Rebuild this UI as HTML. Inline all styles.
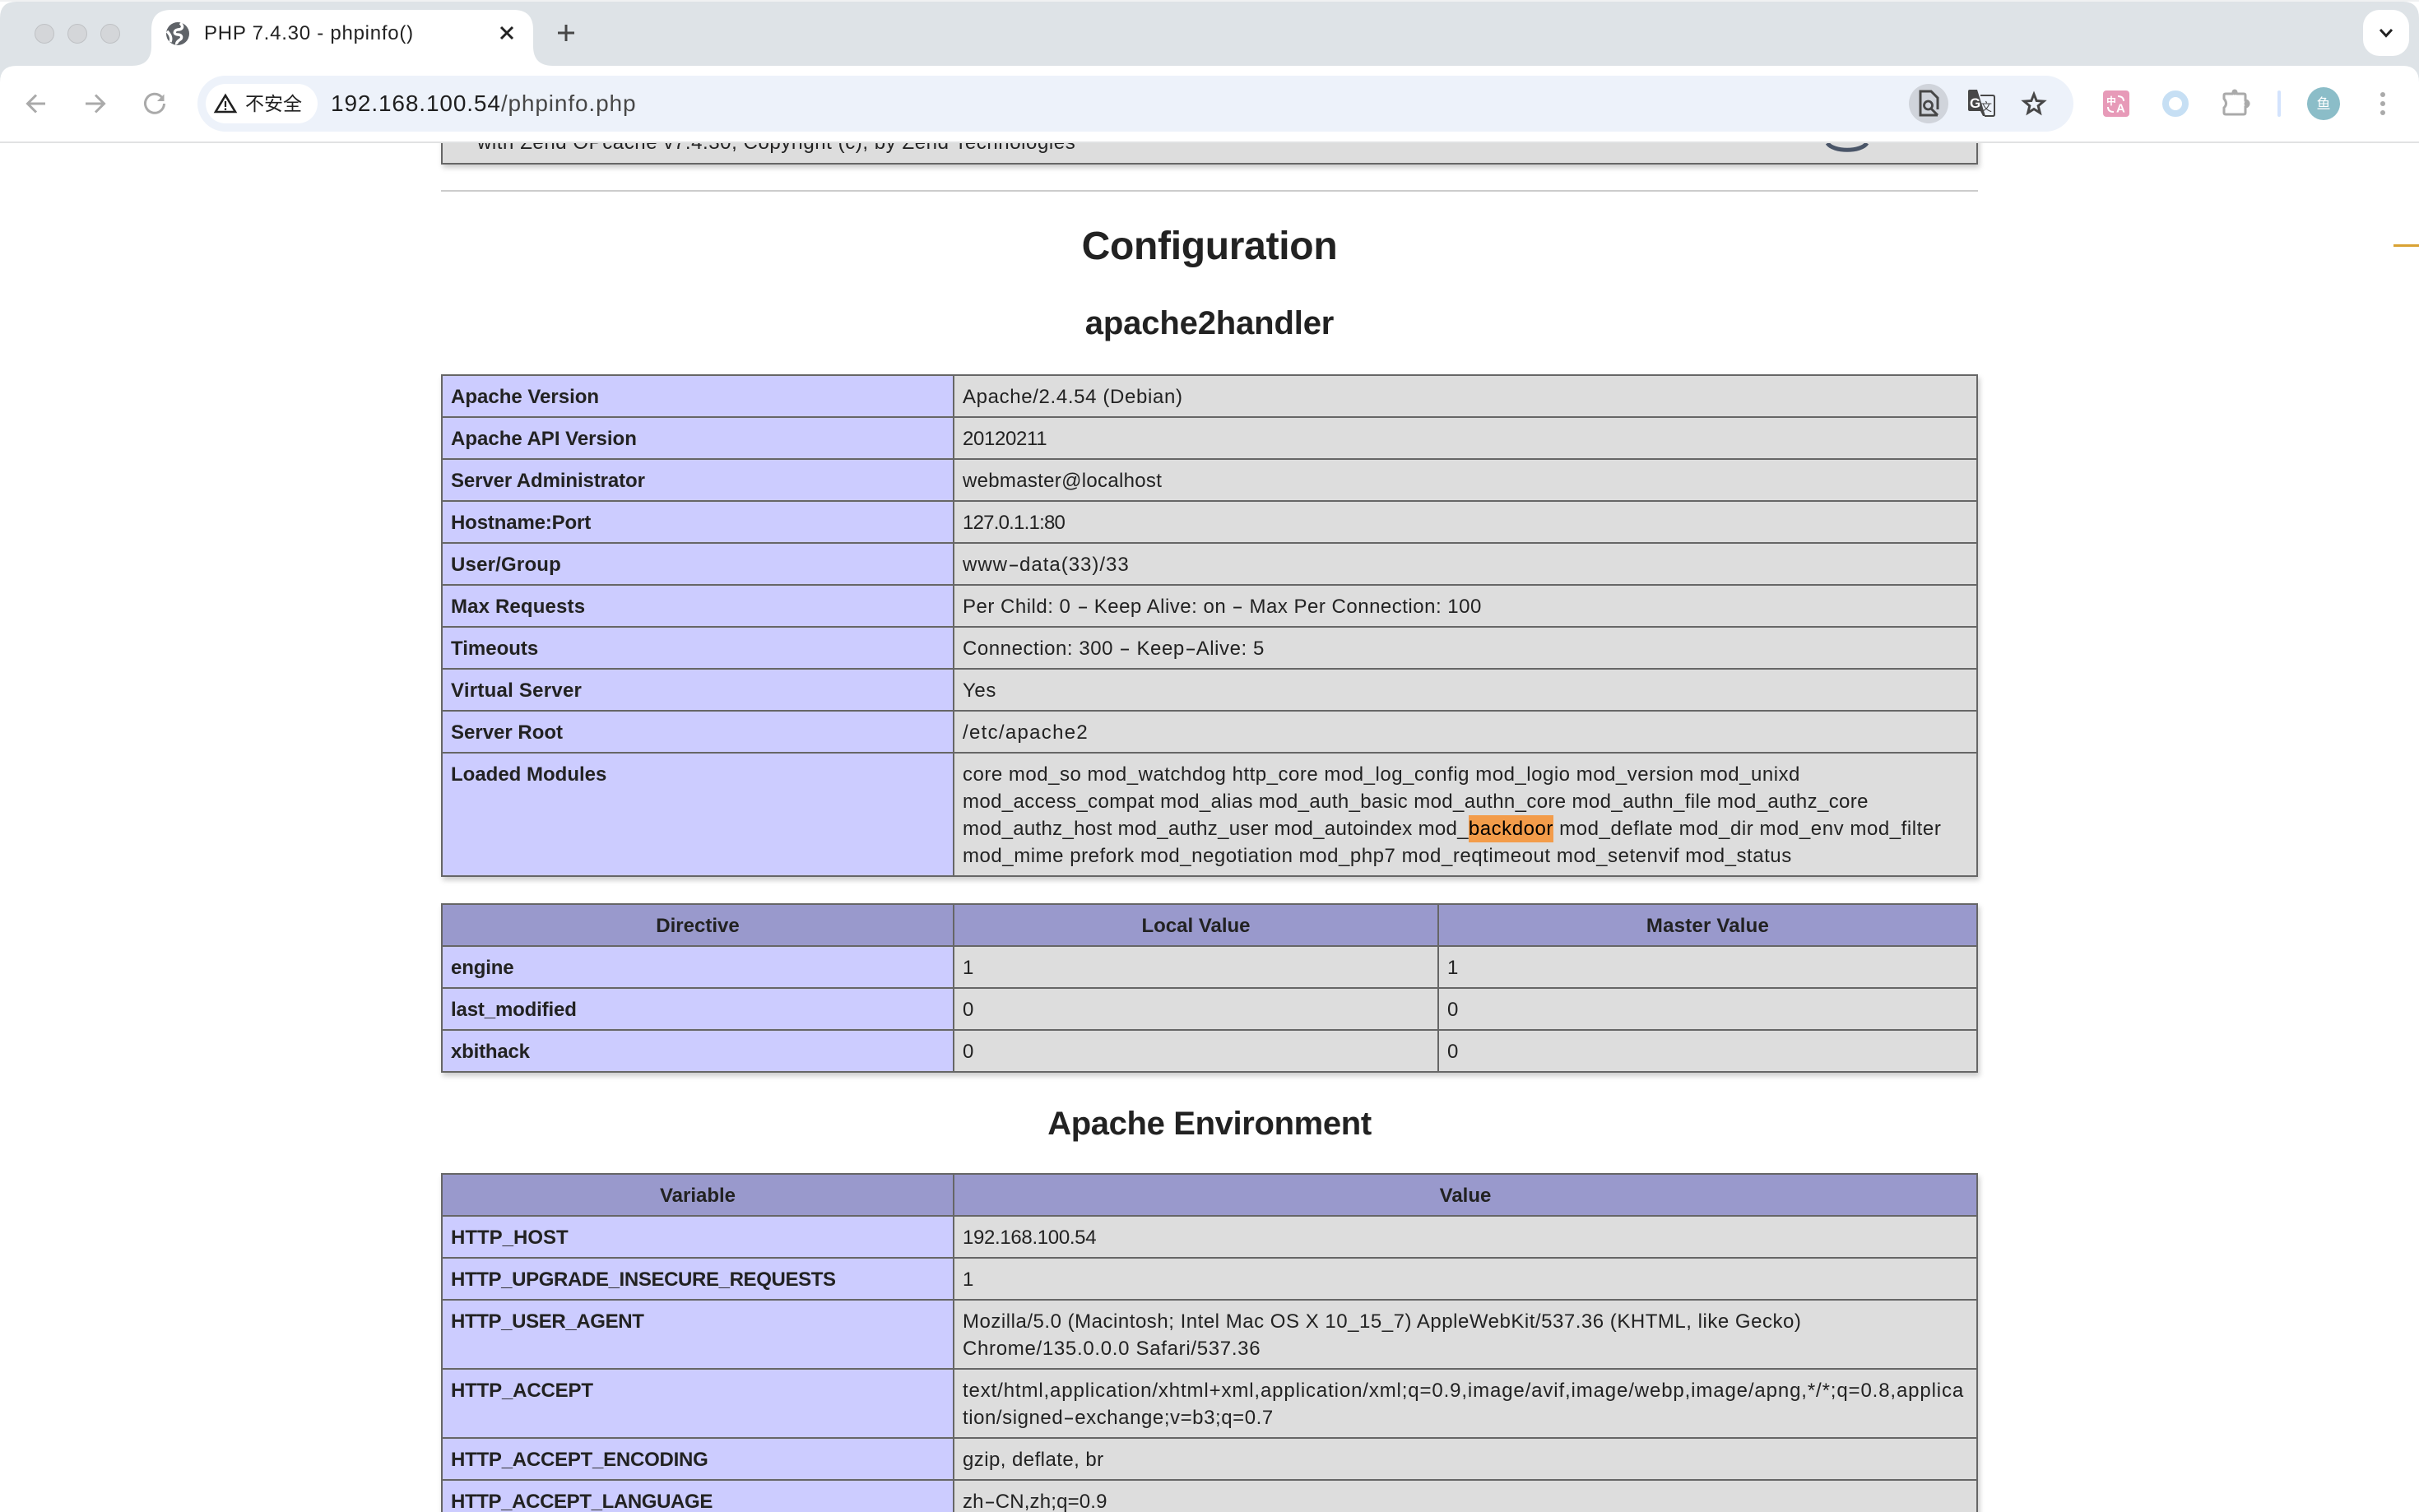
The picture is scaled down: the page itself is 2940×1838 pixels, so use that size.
<!DOCTYPE html>
<html lang="zh-CN">
<head>
<meta charset="utf-8">
<title>PHP 7.4.30 - phpinfo()</title>
<style>
html,body{margin:0;padding:0;width:2940px;height:1838px;overflow:hidden;background:#fff}
body{position:relative;font-family:"Liberation Sans","Noto Sans CJK SC",sans-serif;color:#222}
.abs{position:absolute;white-space:nowrap}
table{position:absolute;left:536px;width:1868px;border-collapse:collapse;table-layout:fixed;font-size:24px;line-height:33px;box-shadow:2px 4px 6px #ccc;color:#222}
td,th{border:2px solid #666;padding:9px 10px 7px;vertical-align:top;white-space:nowrap;overflow:visible;text-align:left}
td.e{background:#ccf;font-weight:bold}
td.v{background:#ddd}
tr.h th{background:#99c;font-weight:bold;text-align:center}
mark{display:inline-block;height:33px;line-height:33px;background:#f39c4a;color:#000}
i{display:inline-block;font-style:normal;width:14px;text-align:center;transform:scaleX(1.7);letter-spacing:0}
h2{position:absolute;left:536px;width:1868px;margin:0;text-align:center;font-weight:bold;color:#222}
#chrome{position:absolute;left:0;top:0;width:2940px;height:174px;overflow:hidden}
</style>
</head>
<body>

<div class="abs" style="left:536px;top:90px;width:1864px;height:106px;background:#ddd;border:2px solid #666;box-shadow:2px 4px 6px #ccc"></div>
<div class="abs" style="left:580px;top:157px;font-size:24px;line-height:33px;letter-spacing:.57px;color:#222">with Zend OPcache v7.4.30, Copyright (c), by Zend Technologies</div>
<svg class="abs" style="left:2200px;top:150px" width="90" height="40" viewBox="0 0 90 40"><path d="M21 24 C28 35 62 35 69 24" fill="none" stroke="#4a5568" stroke-width="5"/></svg>

<div class="abs" style="left:536px;top:231px;width:1868px;height:2px;background:#ccc"></div>

<h2 style="top:270px;font-size:48px;line-height:60px;letter-spacing:-.3px">Configuration</h2>
<h2 style="top:368px;font-size:40px;line-height:50px;letter-spacing:-.15px">apache2handler</h2>

<table style="top:455px">
<colgroup><col style="width:622px"><col></colgroup>
<tr><td class="e">Apache Version</td><td class="v" style="letter-spacing:.64px">Apache/2.4.54 (Debian)</td></tr>
<tr><td class="e">Apache API Version</td><td class="v" style="letter-spacing:-.35px">20120211</td></tr>
<tr><td class="e" style="letter-spacing:-.1px">Server Administrator</td><td class="v" style="letter-spacing:.3px">webmaster@localhost</td></tr>
<tr><td class="e" style="letter-spacing:-.15px">Hostname:Port</td><td class="v" style="letter-spacing:-.78px">127.0.1.1:80</td></tr>
<tr><td class="e" style="letter-spacing:.2px">User/Group</td><td class="v" style="letter-spacing:1px">www<i>-</i>data(33)/33</td></tr>
<tr><td class="e" style="letter-spacing:.15px">Max Requests</td><td class="v" style="letter-spacing:.5px">Per Child: 0 <i>-</i> Keep Alive: on <i>-</i> Max Per Connection: 100</td></tr>
<tr><td class="e">Timeouts</td><td class="v" style="letter-spacing:.55px">Connection: 300 <i>-</i> Keep<i>-</i>Alive: 5</td></tr>
<tr><td class="e" style="letter-spacing:.25px">Virtual Server</td><td class="v" style="letter-spacing:.6px">Yes</td></tr>
<tr><td class="e">Server Root</td><td class="v" style="letter-spacing:1.3px">/etc/apache2</td></tr>
<tr><td class="e">Loaded Modules</td><td class="v"><span style="letter-spacing:.51px">core mod_so mod_watchdog http_core mod_log_config mod_logio mod_version mod_unixd</span><br><span style="letter-spacing:.37px">mod_access_compat mod_alias mod_auth_basic mod_authn_core mod_authn_file mod_authz_core</span><br><span style="letter-spacing:.3px">mod_authz_host mod_authz_user mod_autoindex mod_</span><mark style="letter-spacing:.55px">backdoor</mark><span style="letter-spacing:.56px"> mod_deflate mod_dir mod_env mod_filter</span><br><span style="letter-spacing:.54px">mod_mime prefork mod_negotiation mod_php7 mod_reqtimeout mod_setenvif mod_status</span></td></tr>
</table>

<table style="top:1098px">
<colgroup><col style="width:622px"><col style="width:589px"><col></colgroup>
<tr class="h"><th>Directive</th><th>Local Value</th><th style="letter-spacing:.2px">Master Value</th></tr>
<tr><td class="e" style="letter-spacing:-.15px">engine</td><td class="v">1</td><td class="v">1</td></tr>
<tr><td class="e" style="letter-spacing:-.15px">last_modified</td><td class="v">0</td><td class="v">0</td></tr>
<tr><td class="e" style="letter-spacing:-.2px">xbithack</td><td class="v">0</td><td class="v">0</td></tr>
</table>

<h2 style="top:1341px;font-size:40px;line-height:50px;letter-spacing:-.36px">Apache Environment</h2>

<table style="top:1426px">
<colgroup><col style="width:622px"><col></colgroup>
<tr class="h"><th>Variable</th><th>Value</th></tr>
<tr><td class="e">HTTP_HOST</td><td class="v" style="letter-spacing:-.33px">192.168.100.54</td></tr>
<tr><td class="e" style="letter-spacing:-.37px">HTTP_UPGRADE_INSECURE_REQUESTS</td><td class="v">1</td></tr>
<tr><td class="e" style="letter-spacing:-.37px">HTTP_USER_AGENT</td><td class="v"><span style="letter-spacing:.52px">Mozilla/5.0 (Macintosh; Intel Mac OS X 10_15_7) AppleWebKit/537.36 (KHTML, like Gecko)</span><br><span style="letter-spacing:.69px">Chrome/135.0.0.0 Safari/537.36</span></td></tr>
<tr><td class="e" style="letter-spacing:-.17px">HTTP_ACCEPT</td><td class="v"><span style="letter-spacing:.87px">text/html,application/xhtml+xml,application/xml;q=0.9,image/avif,image/webp,image/apng,*/*;q=0.8,applica</span><br><span style="letter-spacing:.56px">tion/signed<i>-</i>exchange;v=b3;q=0.7</span></td></tr>
<tr><td class="e" style="letter-spacing:-.24px">HTTP_ACCEPT_ENCODING</td><td class="v" style="letter-spacing:.44px">gzip, deflate, br</td></tr>
<tr><td class="e" style="letter-spacing:-.37px">HTTP_ACCEPT_LANGUAGE</td><td class="v" style="letter-spacing:.17px">zh<i>-</i>CN,zh;q=0.9</td></tr>
</table>

<div class="abs" style="left:2909px;top:297px;width:31px;height:3px;background:#d9a233"></div>

<div id="chrome">
<svg class="abs" style="left:0;top:0" width="2940" height="174" viewBox="0 0 2940 174">
  <!-- window frame -->
  <rect width="2940" height="174" fill="#fff"/>
  <path d="M0 174V22Q0 2 20 2H2920Q2940 2 2940 22V174Z" fill="#dee3e7"/>
  <path d="M0 0H2940V2H0Z" fill="#f0f1f2"/>
  <!-- toolbar -->
  <path d="M0 174V100Q0 80 20 80H2920Q2940 80 2940 100V174Z" fill="#fff"/>
  <rect y="172" width="2940" height="2" fill="#e1e2e3"/>
  <!-- tab -->
  <path d="M160 80Q184 80 184 56V36Q184 12 208 12H624Q648 12 648 36V56Q648 80 672 80Z" fill="#fff"/>
  <!-- traffic lights -->
  <g fill="#d4d6d9" stroke="#bfc1c4" stroke-width="1"><circle cx="54" cy="41" r="11.5"/><circle cx="94" cy="41" r="11.5"/><circle cx="134" cy="41" r="11.5"/></g>
  <!-- globe -->
  <circle cx="216" cy="41" r="14" fill="#5f6368"/>
  <path d="M219 28C224 33 221 36 216 36C211 37 211 42 216 42C221 42 222 46 219 48C216 50 214 52 215 54M203 38C207 42 209 46 207 51" fill="none" stroke="#fff" stroke-width="3.4"/>
  <!-- close + plus -->
  <path d="M609 33L623 47M623 33L609 47" stroke="#222" stroke-width="3" fill="none"/>
  <path d="M688 30V50M678 40H698" stroke="#474747" stroke-width="3" fill="none"/>
  <!-- nav -->
  <path d="M55 126H34M44 115.500L33.500 126L44 136.500" fill="none" stroke="#aaa" stroke-width="3"/>
  <path d="M104 126H126M116 115.500L126.500 126L116 136.500" fill="none" stroke="#aaa" stroke-width="3"/>
  <path d="M196.500 118A11.500 11.500 0 1 0 199.500 126" fill="none" stroke="#aaa" stroke-width="3"/>
  <path d="M199.500 114.500V123H191Z" fill="#aaa"/>
  <!-- address bar -->
  <rect x="240" y="92" width="2280" height="68" rx="34" fill="#edf2fa"/>
  <rect x="250" y="102" width="136" height="48" rx="24" fill="#fff"/>
  <path d="M274 116L286 136H262Z" fill="none" stroke="#1f1f1f" stroke-width="2.600" stroke-linejoin="miter"/>
  <path d="M274 123V130M274 131.500V134" stroke="#1f1f1f" stroke-width="2.200" fill="none"/>
  <!-- page-info circle + doc -->
  <circle cx="2344" cy="126" r="24" fill="#d0d4db"/>
  <path d="M2355 140H2334V111H2347L2355 119V133" fill="none" stroke="#474747" stroke-width="3"/>
  <circle cx="2343.500" cy="128" r="5" fill="none" stroke="#474747" stroke-width="2.800"/>
  <path d="M2347 132L2355 140" stroke="#474747" stroke-width="3"/>
  <!-- translate -->
  <path d="M2394 109H2403L2413 141H2410L2407 135H2394Q2392 135 2392 133V111Q2392 109 2394 109Z" fill="#474747"/>
  <path d="M2407 116H2422Q2424 116 2424 118V139Q2424 141 2422 141H2412" fill="none" stroke="#474747" stroke-width="2"/>
  <text x="2394" y="131" font-family="Liberation Sans,sans-serif" font-size="17" font-weight="bold" fill="#fff">G</text>
  <text x="2407" y="135" font-family="Noto Sans CJK SC,sans-serif" font-size="14" fill="#474747">文</text>
  <!-- star -->
  <path d="M2472 114.500L2475.200 122.500L2483.900 123.100L2477.200 128.700L2479.300 137.100L2472 132.500L2464.700 137.100L2466.800 128.700L2460.100 123.100L2468.800 122.500Z" fill="none" stroke="#474747" stroke-width="3"/>
  <!-- pink ext -->
  <rect x="2556" y="110" width="32" height="32" rx="4" fill="#e79ab8"/>
  <text x="2560" y="127" font-family="Noto Sans CJK SC,sans-serif" font-size="12" fill="#fff" font-weight="bold">中</text>
  <text x="2572" y="136.500" font-family="Liberation Sans,sans-serif" font-size="15" fill="#fff" font-weight="bold">A</text>
  <path d="M2574 117Q2581 117 2581 123M2562 130Q2562 136 2569 136" fill="none" stroke="#fff" stroke-width="2"/>
  <!-- ring -->
  <circle cx="2644" cy="126" r="12" fill="none" stroke="#c6dff4" stroke-width="8"/>
  <!-- puzzle -->
  <path d="M2705 114H2713A3.500 3.500 0 0 1 2719 114H2727Q2729 114 2729 116V122A4 4 0 0 1 2729 130V137Q2729 139 2727 139H2705Q2703 139 2703 137V131Q2708 126 2703 120V116Q2703 114 2705 114Z" fill="none" stroke="#aaa" stroke-width="3"/>
  <circle cx="2716" cy="112" r="3.500" fill="#aaa"/><circle cx="2731" cy="126" r="3.500" fill="#aaa"/>
  <!-- divider -->
  <rect x="2768" y="110" width="4" height="32" rx="2" fill="#d3e3fd"/>
  <!-- avatar -->
  <circle cx="2824" cy="126" r="20" fill="#8bbdc8"/>
  <text x="2824" y="132" text-anchor="middle" font-family="Noto Sans CJK SC,sans-serif" font-size="17" fill="#fff">鱼</text>
  <!-- menu dots -->
  <circle cx="2896" cy="115" r="3" fill="#aaa"/><circle cx="2896" cy="126" r="3" fill="#aaa"/><circle cx="2896" cy="137" r="3" fill="#aaa"/>
  <!-- tab search -->
  <rect x="2872" y="12" width="56" height="56" rx="20" fill="#fff"/>
  <path d="M2893 36L2900 43.500L2907 36" fill="none" stroke="#222" stroke-width="3"/>
</svg>
<div class="abs" style="left:248px;top:26px;font-size:24px;line-height:30px;letter-spacing:.75px;color:#222">PHP 7.4.30 - phpinfo()</div>
<div class="abs" style="left:298px;top:110px;font-size:23px;line-height:32px;color:#222;font-family:'Liberation Sans','Noto Sans CJK SC',sans-serif">不安全</div>
<div class="abs" style="left:402px;top:109px;font-size:28px;line-height:34px;letter-spacing:.87px;color:#1f1f1f">192.168.100.54<span style="color:#474747">/phpinfo.php</span></div>
</div>

</body>
</html>
